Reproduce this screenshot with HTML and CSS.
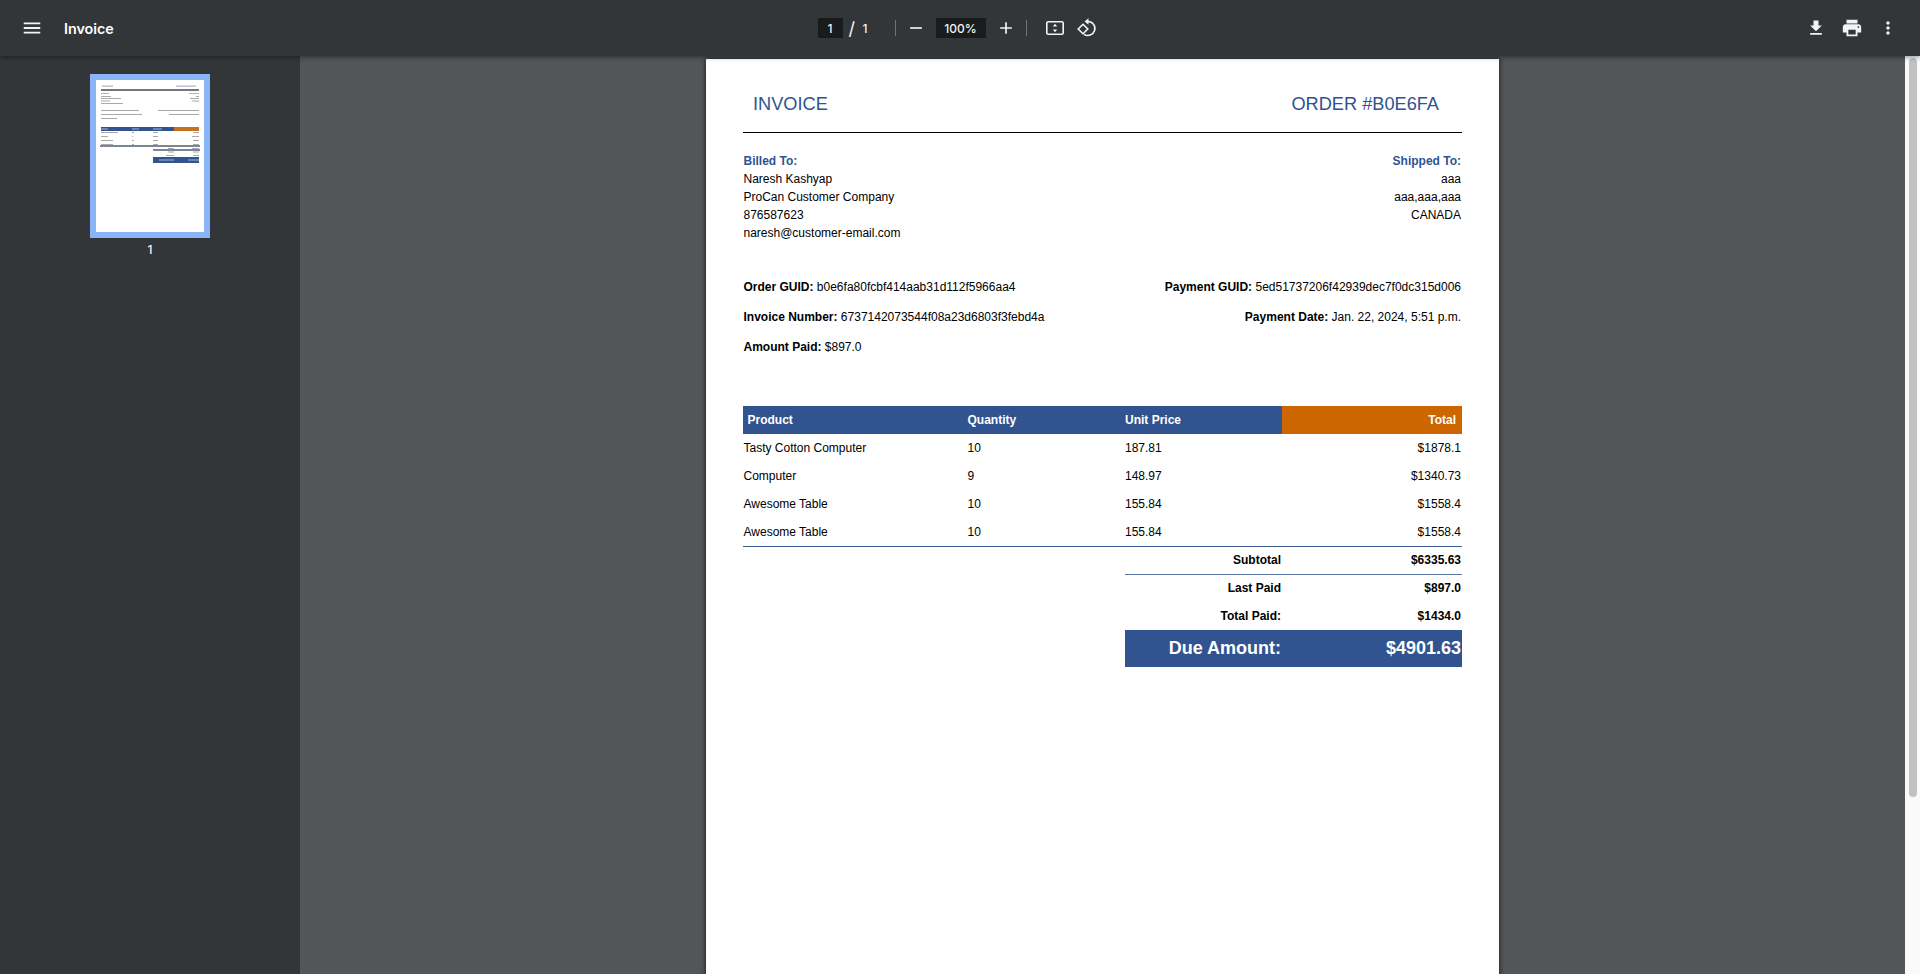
FILE: index.html
```html
<!DOCTYPE html>
<html lang="en">
<head>
<meta charset="utf-8">
<title>Invoice</title>
<link rel="stylesheet" href="styles.css">
</head>
<body>
<header class="toolbar">
  <div class="tb-left">
    <svg class="icon menu-icon" viewBox="0 0 24 24"><path d="M3 18h18v-2H3v2zm0-5h18v-2H3v2zm0-7v2h18V6H3z"/></svg>
    <span class="doc-title">Invoice</span>
  </div>
  <div class="tb-center">
    <span class="field page-field">1</span>
    <span class="slash">/</span>
    <span class="page-total">1</span>
    <span class="sep sep-a"></span>
    <svg class="icon zoom-out" viewBox="0 0 24 24"><path d="M5 11h14v2H5z"/></svg>
    <span class="field zoom-field">100%</span>
    <svg class="icon zoom-in" viewBox="0 0 24 24"><path d="M19 13h-6v6h-2v-6H5v-2h6V5h2v6h6v2z"/></svg>
    <span class="sep sep-b"></span>
    <svg class="icon fit-icon" viewBox="0 0 24 24"><rect class="line" x="3.800" y="5.800" width="16.400" height="12.400" rx="1.500"/><path d="M12 7.800l2.200 2.700H9.800zM12 16.200l-2.200-2.700h4.400z"/></svg>
    <svg class="icon rotate-icon" viewBox="0 0 24 24"><path class="line" d="M12 5.500a7 7 0 1 1-4 12.800"/><path d="M12.500 2.300v6.400L8.600 5.500z"/><path class="line" d="M7 8.300 11.800 13 7 17.700 2.200 13z"/></svg>
  </div>
  <div class="tb-right">
    <svg class="icon" viewBox="0 0 24 24"><path d="M19 9h-4V3H9v6H5l7 7 7-7zM5 18v2h14v-2H5z"/></svg>
    <svg class="icon print-icon" viewBox="0 0 24 24"><path d="M19 8H5c-1.660 0-3 1.340-3 3v6h4v4h12v-4h4v-6c0-1.660-1.340-3-3-3zm-3 11H8v-5h8v5zm3-7c-.550 0-1-.450-1-1s.450-1 1-1 1 .450 1 1-.450 1-1 1zm-1-9H6v4h12V3z"/></svg>
    <svg class="icon" viewBox="0 0 24 24"><path d="M12 8c1.100 0 2-.900 2-2s-.900-2-2-2-2 .900-2 2 .900 2 2 2zm0 2c-1.100 0-2 .900-2 2s.900 2 2 2 2-.900 2-2-.900-2-2-2zm0 6c-1.100 0-2 .900-2 2s.900 2 2 2 2-.900 2-2-.900-2-2-2z"/></svg>
  </div>
</header>
<div class="workspace">
  <aside class="sidebar">
    <div class="thumb">
      <svg class="thumb-art" viewBox="0 0 108 152">
        <rect width="108" height="152" fill="#fff"/>
        <g fill="#aab4c6">
          <rect x="6" y="5.500" width="11" height="1.200"/><rect x="80" y="5.500" width="20" height="1.200"/>
          <rect x="5" y="13" width="8" height="1"/><rect x="93" y="13" width="10" height="1"/>
        </g>
        <rect x="5" y="9" width="98" height="2" fill="#777"/>
        <g fill="#a9a9a9">
          <rect x="5" y="16" width="10" height="1"/><rect x="100" y="16" width="3" height="1"/>
          <rect x="5" y="18" width="20" height="1"/><rect x="94" y="18" width="9" height="1"/>
          <rect x="5" y="20.500" width="9" height="1"/><rect x="96" y="20.500" width="7" height="1"/>
          <rect x="5" y="23" width="22" height="1"/>
          <rect x="5" y="30" width="38" height="1"/><rect x="62" y="30" width="41" height="1"/>
          <rect x="5" y="34" width="41" height="1"/><rect x="73" y="34" width="30" height="1"/>
          <rect x="5" y="38" width="16" height="1"/>
          <rect x="5" y="52" width="17" height="1"/><rect x="36" y="52" width="2" height="1"/><rect x="57" y="52" width="5" height="1"/><rect x="97" y="52" width="6" height="1"/>
          <rect x="5" y="56" width="7" height="1"/><rect x="36" y="56" width="1" height="1"/><rect x="57" y="56" width="5" height="1"/><rect x="96" y="56" width="7" height="1"/>
          <rect x="5" y="60" width="12" height="1"/><rect x="36" y="60" width="2" height="1"/><rect x="57" y="60" width="5" height="1"/><rect x="97" y="60" width="6" height="1"/>
          <rect x="5" y="64" width="12" height="1"/><rect x="36" y="64" width="2" height="1"/><rect x="57" y="64" width="5" height="1"/><rect x="97" y="64" width="6" height="1"/>
          <rect x="72" y="68" width="6" height="1"/><rect x="96" y="68" width="7" height="1"/>
          <rect x="72" y="71.500" width="6" height="1"/><rect x="97" y="71.500" width="6" height="1"/>
          <rect x="70" y="75" width="8" height="1"/><rect x="97" y="75" width="6" height="1"/>
        </g>
        <rect x="5" y="47" width="73" height="4" fill="#31538f"/>
        <rect x="78" y="47" width="25" height="4" fill="#c4721f"/>
        <rect x="4" y="65" width="100" height="2" fill="#7b8799"/>
        <rect x="57" y="69" width="47" height="2" fill="#7b8799"/>
        <rect x="57" y="77" width="46" height="6" fill="#31538f"/>
        <g fill="#a8b6d2">
          <rect x="5" y="48.500" width="7" height="1"/><rect x="36" y="48.500" width="7" height="1"/><rect x="57" y="48.500" width="9" height="1"/>
          <rect x="63" y="79.500" width="15" height="1"/><rect x="92" y="79.500" width="11" height="1"/>
        </g>
      </svg>
    </div>
    <div class="thumb-label">1</div>
  </aside>
  <main class="viewer">
    <article class="page">
      <div class="doc-head">
        <h1>INVOICE</h1>
        <h1>ORDER #B0E6FA</h1>
      </div>
      <section class="addresses">
        <div>
          <strong class="blue">Billed To:</strong>
          <p>Naresh Kashyap</p>
          <p>ProCan Customer Company</p>
          <p>876587623</p>
          <p>naresh@customer-email.com</p>
        </div>
        <div class="right">
          <strong class="blue">Shipped To:</strong>
          <p>aaa</p>
          <p>aaa,aaa,aaa</p>
          <p>CANADA</p>
        </div>
      </section>
      <section class="meta">
        <div>
          <p><b>Order GUID:</b> b0e6fa80fcbf414aab31d112f5966aa4</p>
          <p><b>Invoice Number:</b> 6737142073544f08a23d6803f3febd4a</p>
          <p><b>Amount Paid:</b> $897.0</p>
        </div>
        <div class="right">
          <p><b>Payment GUID:</b> 5ed51737206f42939dec7f0dc315d006</p>
          <p><b>Payment Date:</b> Jan. 22, 2024, 5:51 p.m.</p>
        </div>
      </section>
      <table class="items">
        <colgroup><col class="c1"><col class="c2"><col class="c3"><col class="c4"></colgroup>
        <thead>
          <tr><th class="pl">Product</th><th class="qty">Quantity</th><th>Unit Price</th><th class="total-head">Total</th></tr>
        </thead>
        <tbody>
          <tr><td class="qty">Tasty Cotton Computer</td><td class="qty">10</td><td>187.81</td><td class="num">$1878.1</td></tr>
          <tr><td class="qty">Computer</td><td class="qty">9</td><td>148.97</td><td class="num">$1340.73</td></tr>
          <tr><td class="qty">Awesome Table</td><td class="qty">10</td><td>155.84</td><td class="num">$1558.4</td></tr>
          <tr class="last-item"><td class="qty">Awesome Table</td><td class="qty">10</td><td>155.84</td><td class="num">$1558.4</td></tr>
        </tbody>
        <tfoot>
          <tr class="sub"><td colspan="2"></td><td class="lab">Subtotal</td><td class="num">$6335.63</td></tr>
          <tr><td colspan="2"></td><td class="lab">Last Paid</td><td class="num">$897.0</td></tr>
          <tr><td colspan="2"></td><td class="lab">Total Paid:</td><td class="num">$1434.0</td></tr>
          <tr class="due"><td colspan="2" class="blank"></td><td class="lab">Due Amount:</td><td class="num">$4901.63</td></tr>
        </tfoot>
      </table>
    </article>
  </main>
  <div class="scrollbar"><div class="scroll-thumb"></div></div>
</div>
</body>
</html>
```
FILE: styles.css
```css
* { box-sizing: border-box; }
html, body { margin: 0; height: 100%; overflow: hidden; }
body {
  display: flex;
  flex-direction: column;
  background: #525659;
  font-family: "Liberation Sans", Arial, sans-serif;
}
.toolbar {
  position: relative;
  z-index: 3;
  flex: 0 0 56px;
  display: flex;
  align-items: center;
  background: #323639;
  color: #f1f3f4;
  box-shadow: 0 1px 5px rgba(0,0,0,.45);
  font-family: Inter, "Noto Sans", sans-serif;
}
.icon { width: 20px; height: 20px; fill: #f1f3f4; flex: none; display: block; }
.line { fill: none; stroke: #f1f3f4; stroke-width: 1.600; }
.tb-left { flex: 1; display: flex; align-items: center; padding-left: 21px; }
.menu-icon { width: 22px; height: 22px; }
.doc-title { margin-left: 21px; font-size: 14.300px; font-weight: 600; color: #fff; }
.tb-center { display: flex; align-items: center; width: 284px; height: 56px; }
.field {
  background: #191b1c;
  height: 20px;
  display: flex;
  align-items: center;
  justify-content: center;
  font-size: 12px;
  font-weight: 500;
}
.page-field { width: 25px; }
.slash { margin-left: 6px; width: 5px; font-size: 18px; font-weight: 400; text-align: center; }
.page-total { margin-left: 9px; font-size: 12px; font-weight: 500; width: 8px; }
.sep { width: 1px; height: 16px; background: #6f7376; flex: none; }
.sep-a { margin-left: 24px; }
.zoom-out { margin-left: 10px; }
.zoom-field { width: 50px; margin-left: 10px; }
.zoom-in { margin-left: 10px; }
.sep-b { margin-left: 10px; }
.fit-icon { margin-left: 16px; width: 24px; height: 24px; }
.rotate-icon { margin-left: 9px; width: 24px; height: 24px; }
.tb-right { flex: 1; display: flex; justify-content: flex-end; align-items: center; gap: 16px; padding-right: 22px; }
.print-icon { width: 22px; height: 22px; margin: 0 -1px; }

.workspace { flex: 1; display: flex; min-height: 0; }
.sidebar {
  flex: 0 0 300px;
  background: #323639;
  display: flex;
  flex-direction: column;
  align-items: center;
  padding-top: 18px;
  position: relative;
  z-index: 1;
}
.thumb { width: 120px; height: 164px; border: 6px solid #8ab4f8; background: #fff; }
.thumb-art { display: block; width: 108px; height: 152px; filter: blur(.4px); }
.thumb-label { margin-top: 4px; color: #f1f3f4; font: 500 12px Inter, "Noto Sans", sans-serif; }
.viewer { flex: 1; display: flex; justify-content: center; padding-top: 3px; min-width: 0; overflow: hidden; }
.scrollbar { flex: 0 0 15px; background: #fafafa; padding: 2px 3px 0 4px; }
.scroll-thumb { height: 739px; background: #c1c1c1; border-radius: 4px; }

.page {
  flex: 0 0 793px;
  height: 1122px;
  background: #fff;
  color: #000;
  padding: 0 37px;
  font-size: 12px;
  box-shadow: 0 0 5px rgba(0,0,0,.75);
}
.doc-head {
  display: flex;
  justify-content: space-between;
  height: 74px;
  padding: 34px 23px 0 10px;
  border-bottom: 1.500px solid #000;
}
h1 { margin: 0; font-size: 18.200px; font-weight: 400; line-height: 22px; color: #2f5391; }
.blue { color: #2f5391; display: block; }
.addresses, .meta { display: flex; justify-content: space-between; padding-left: .5px; padding-right: 1px; }
.right { text-align: right; }
p { margin: 0; }
.addresses { padding-top: 19px; line-height: 18px; height: 147px; }
.meta { height: 126px; line-height: 15px; }
.meta p { margin-bottom: 15px; }
.items { width: 719px; table-layout: fixed; border-collapse: collapse; }
.c1 { width: 224px; } .c2 { width: 158px; } .c3 { width: 157px; } .c4 { width: 180px; }
.items th {
  height: 28px;
  padding: 0;
  text-align: left;
  background: #31538f;
  color: #fff;
  font-weight: 700;
}
.items th.pl { padding-left: 4.500px; }
.items th.total-head { background: #cc6600; text-align: right; padding-right: 6px; }
.items td { height: 28px; padding: 0; }
.items .qty { padding-left: .5px; }
.items .num { text-align: right; padding-right: 1px; }
.last-item td { border-bottom: 1px solid #3f5e96; }
.items tfoot td { font-weight: 700; }
.items .lab { text-align: right; padding-right: 1px; }
.sub td:nth-child(n+2) { border-bottom: 1px solid #5d78a8; }
.due .lab, .due .num { background: #31538f; color: #fff; font-size: 18px; height: 37px; }
```
